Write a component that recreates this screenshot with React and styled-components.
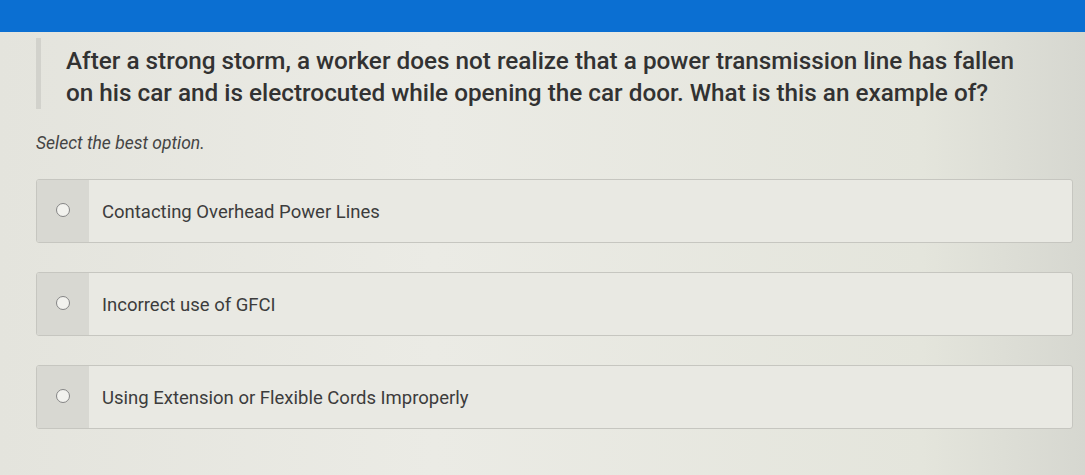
import React from 'react';
import styled, { createGlobalStyle } from 'styled-components';

const GlobalStyle = createGlobalStyle`
  html, body {
    margin: 0;
    padding: 0;
    background: #e6e6df;
  }
  body {
    font-family: Roboto, "Liberation Sans", sans-serif;
    color: #353535;
  }
`;

const options = [
  'Contacting Overhead Power Lines',
  'Incorrect use of GFCI',
  'Using Extension or Flexible Cords Improperly',
];

const App = () => {
  return (
    <Page>
      <GlobalStyle />
      <TopBar />
      <Content>
        <Question>
          After a strong storm, a worker does not realize that a power transmission line has fallen
          on his car and is electrocuted while opening the car door. What is this an example of?
        </Question>
        <Hint>Select the best option.</Hint>
        <OptionList>
          {options.map((label) => (
            <Option key={label}>
              <RadioCell>
                <Radio />
              </RadioCell>
              <Label>{label}</Label>
            </Option>
          ))}
        </OptionList>
      </Content>
    </Page>
  );
};

const Page = styled.div`
  width: 1085px;
  height: 475px;
  overflow: hidden;
  background: linear-gradient(90deg, #e4e4dd 0%, #ebebe5 40%, #e4e5dc 85%, #d6d7d0 100%);
`;

const TopBar = styled.div`
  height: 32px;
  background: #0b6fd2;
`;

const Content = styled.div`
  padding: 6px 12px 0 36px;
`;

const Question = styled.div`
  border-left: 5px solid #d2d2cc;
  padding: 7px 30px 0 25px;
  font-size: 24.3px;
  font-weight: 500;
  line-height: 32px;
  color: #323232;
`;

const Hint = styled.div`
  margin-top: 24px;
  font-size: 17.5px;
  font-style: italic;
  color: #444;
`;

const OptionList = styled.div`
  margin-top: 26px;
  display: flex;
  flex-direction: column;
  gap: 29px;
`;

const Option = styled.div`
  display: flex;
  height: 62px;
  border: 1px solid #c6c6c0;
  border-radius: 3px;
  background: #e9e9e3;
  overflow: hidden;
`;

const RadioCell = styled.div`
  width: 52px;
  flex: none;
  display: flex;
  align-items: center;
  justify-content: center;
  background: #d8d8d2;
`;

const Radio = styled.span`
  width: 12px;
  height: 12px;
  border: 1.6px solid #858585;
  border-radius: 50%;
  background: #f2f2ee;
  margin-top: -2px;
`;

const Label = styled.div`
  padding: 21px 0 0 13px;
  font-size: 18.5px;
  color: #3c3c3c;
`;

export default App;
